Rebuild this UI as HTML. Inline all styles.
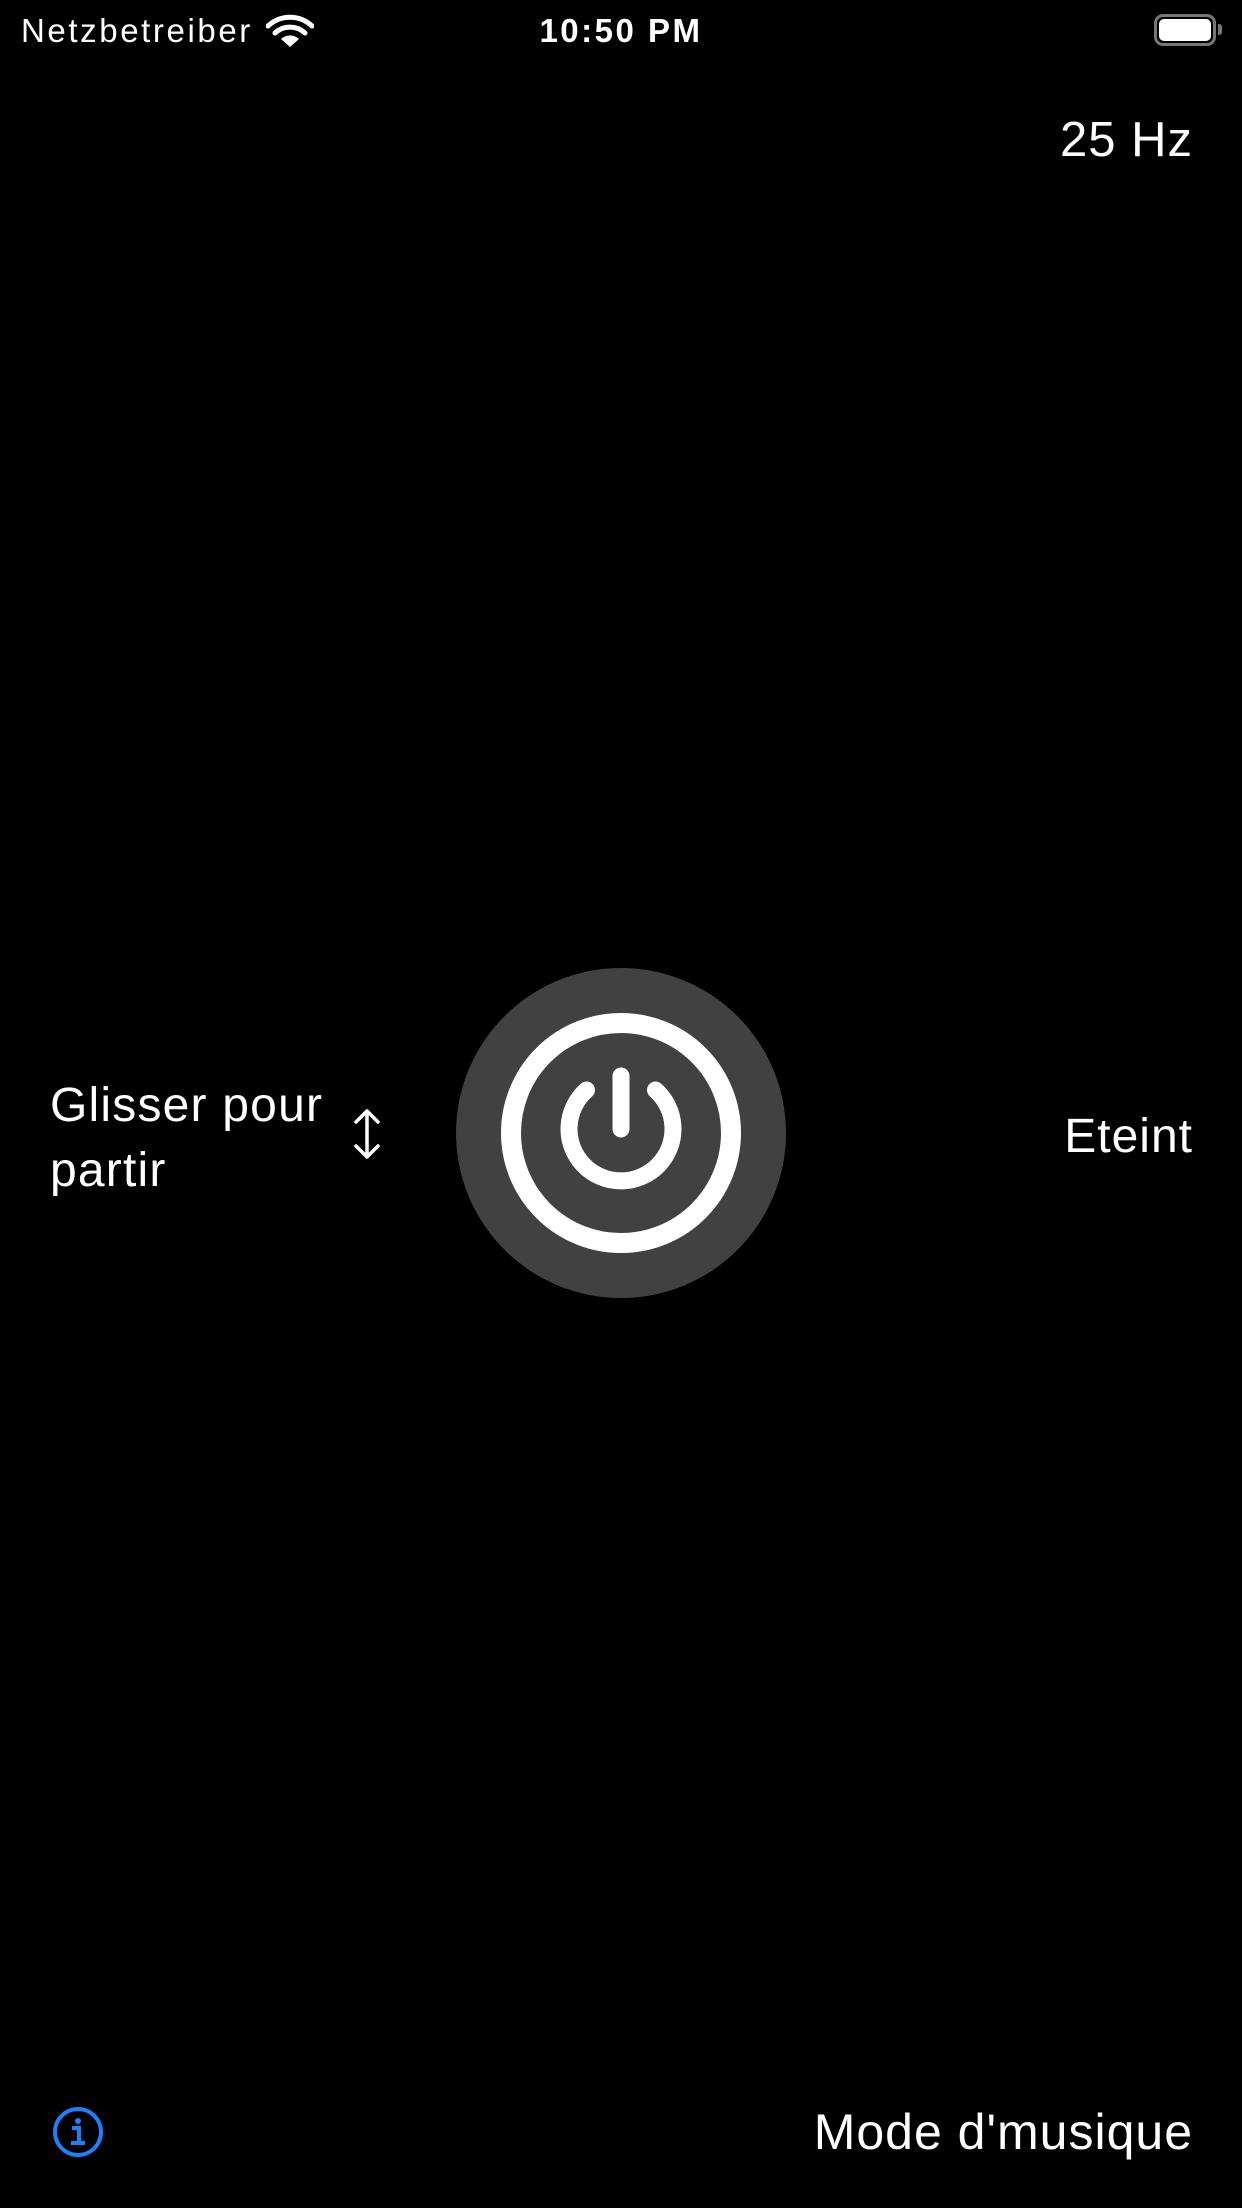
<!DOCTYPE html>
<html><head><meta charset="utf-8"><style>
html,body{margin:0;padding:0;background:#000;}
body{width:1242px;height:2208px;position:relative;overflow:hidden;font-family:"Liberation Sans",sans-serif;color:#fff;}
.t{position:absolute;white-space:nowrap;line-height:1;}
</style></head><body>
<div class="t" style="left:21px;top:14px;font-size:33px;letter-spacing:2.6px;">Netzbetreiber</div>
<svg style="position:absolute;left:266px;top:14px" width="48" height="34" viewBox="0 0 48 34">
<path d="M2 12 A32 32 0 0 1 46 12" stroke="#fff" stroke-width="5" fill="none" stroke-linecap="round"/>
<path d="M9 19 A22 22 0 0 1 39 19" stroke="#fff" stroke-width="5" fill="none" stroke-linecap="round"/>
<path d="M24 33 L15 25 A13 13 0 0 1 33 25 Z" fill="#fff"/>
</svg>
<div class="t" style="left:0;width:1242px;text-align:center;top:14px;font-size:33px;font-weight:bold;letter-spacing:2.5px;">10:50 PM</div>
<div style="position:absolute;left:1154px;top:14px;width:62px;height:32px;border:3px solid #777;border-radius:9px;box-sizing:border-box;"></div>
<div style="position:absolute;left:1159px;top:19px;width:52px;height:22px;background:#fff;border-radius:5px;"></div>
<div style="position:absolute;left:1218px;top:24px;width:4px;height:11px;background:#777;border-radius:0 3px 3px 0;"></div>

<div class="t" style="right:49px;top:116px;font-size:49px;letter-spacing:1px;">25 Hz</div>

<svg style="position:absolute;left:456px;top:968px" width="330" height="330" viewBox="0 0 330 330">
<circle cx="165" cy="165" r="165" fill="#414141"/>
<circle cx="165" cy="165" r="110" fill="none" stroke="#fff" stroke-width="20"/>
<path d="M130.5 122 A52 52 0 1 0 199.5 122" fill="none" stroke="#fff" stroke-width="17" stroke-linecap="round"/>
<line x1="165" y1="108" x2="165" y2="161" stroke="#fff" stroke-width="17" stroke-linecap="round"/>
</svg>

<div class="t" style="left:50px;top:1082px;font-size:48px;letter-spacing:1.2px;">Glisser pour</div>
<div class="t" style="left:50px;top:1147px;font-size:48px;letter-spacing:1.2px;">partir</div>
<svg style="position:absolute;left:352px;top:1108px" width="30" height="52" viewBox="0 0 30 52">
<path d="M15 3 V49 M4 14 L15 3 L26 14 M4 38 L15 49 L26 38" stroke="#fff" stroke-width="3.5" fill="none" stroke-linecap="round" stroke-linejoin="round"/>
</svg>
<div class="t" style="right:49px;top:1113px;font-size:48px;letter-spacing:1px;">Eteint</div>

<svg style="position:absolute;left:52px;top:2106px" width="52" height="52" viewBox="0 0 52 52">
<circle cx="26" cy="26" r="23" fill="none" stroke="#1a82fb" stroke-width="4"/>
<circle cx="26" cy="15" r="3" fill="#1a82fb"/>
<path d="M20 22 H27 V36 M19 37 H33" stroke="#1a82fb" stroke-width="4" fill="none"/>
</svg>
<div class="t" style="right:49px;top:2107px;font-size:50px;letter-spacing:1px;">Mode d'musique</div>
</body></html>
